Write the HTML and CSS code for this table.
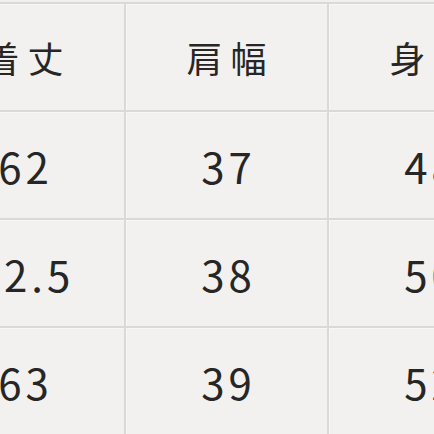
FILE: index.html
```html
<!DOCTYPE html>
<html lang="ja">
<head>
<meta charset="utf-8">
<title>サイズ表</title>
<link rel="stylesheet" href="styles.css">
</head>
<body>
<div class="size-table">
  <div class="cell head">着丈</div>
  <div class="cell head">肩幅</div>
  <div class="cell head">身幅</div>
  <div class="cell num">62</div>
  <div class="cell num">37</div>
  <div class="cell num">48</div>
  <div class="cell num">62.5</div>
  <div class="cell num">38</div>
  <div class="cell num">50</div>
  <div class="cell num">63</div>
  <div class="cell num">39</div>
  <div class="cell num">52</div>
</div>
</body>
</html>
```

FILE: styles.css
```css
html, body {
  margin: 0;
  padding: 0;
  width: 434px;
  height: 434px;
  overflow: hidden;
  background: #f1f0ee;
}

.size-table {
  margin-top: 2px;
  margin-left: -79px;
  width: max-content;
  display: grid;
  grid-template-columns: repeat(3, 201px);
  grid-auto-rows: 106px;
  gap: 2px;
  padding: 2px;
  background: #d9d9d7;
  font-family: "Noto Sans CJK JP", "Noto Sans", sans-serif;
  color: #262626;
}

.cell {
  background: #f2f1ef;
  display: flex;
  align-items: center;
  justify-content: center;
  box-shadow: inset 1px 1px 0 #f7f7f5;
}

.head {
  font-size: 36px;
  letter-spacing: 8px;
  padding-left: 8px;
}

.num {
  font-size: 42px;
  letter-spacing: 4px;
  padding-left: 4px;
}
```
